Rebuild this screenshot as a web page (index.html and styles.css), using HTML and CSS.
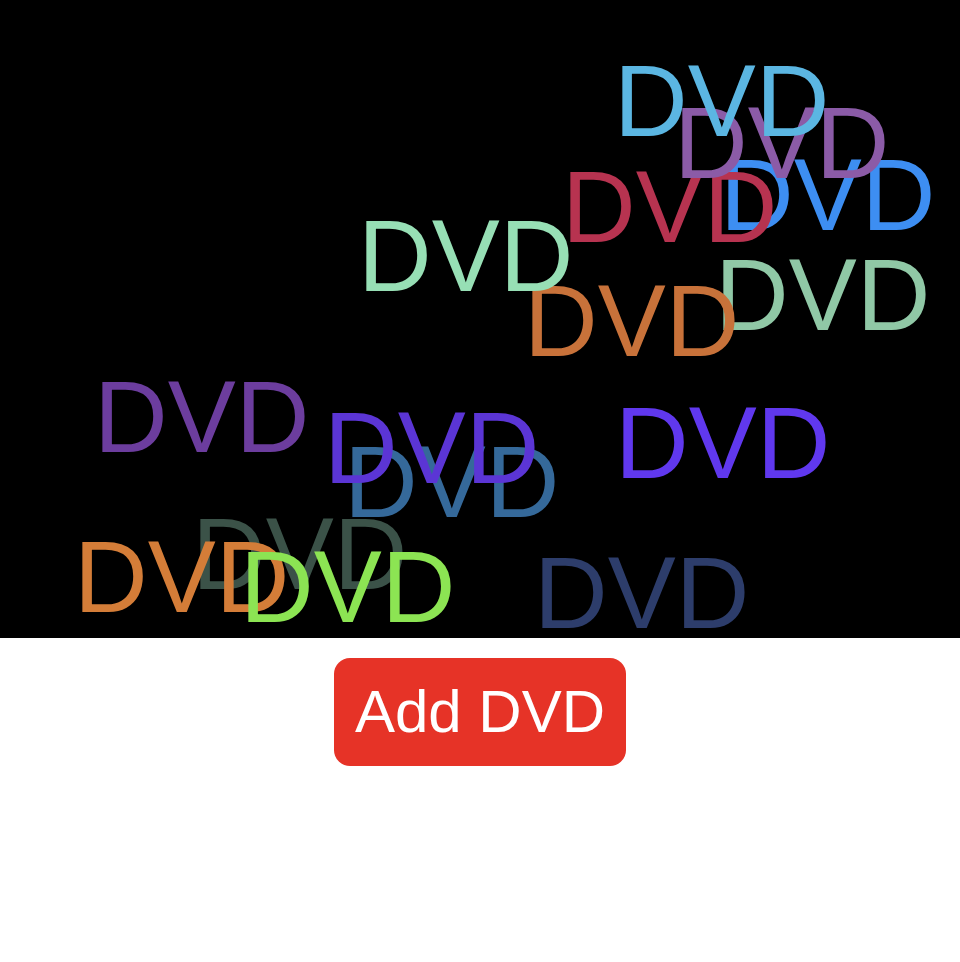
FILE: index.html
```html
<!DOCTYPE html>
<html lang="en">
<head>
<meta charset="utf-8">
<title>DVD</title>
<link rel="stylesheet" href="styles.css">
</head>
<body>
<div class="app">
  <div class="stage">
    <span class="dvd" style="left:715px;top:255px;color:#90c8a6">DVD</span>
    <span class="dvd" style="left:524px;top:281px;color:#c8723a">DVD</span>
    <span class="dvd" style="left:358px;top:216px;color:#97dfb5">DVD</span>
    <span class="dvd" style="left:720px;top:155px;color:#3d8ef2">DVD</span>
    <span class="dvd" style="left:562px;top:167px;color:#b73350">DVD</span>
    <span class="dvd" style="left:674px;top:103px;color:#8b5ba7">DVD</span>
    <span class="dvd" style="left:614px;top:61px;color:#5bb6e2">DVD</span>
    <span class="dvd" style="left:344px;top:442px;color:#35699a">DVD</span>
    <span class="dvd" style="left:324px;top:408px;color:#5b35d5">DVD</span>
    <span class="dvd" style="left:615px;top:403px;color:#6038ee">DVD</span>
    <span class="dvd" style="left:94px;top:377px;color:#6c3d9e">DVD</span>
    <span class="dvd" style="left:192px;top:514px;color:#3b5248">DVD</span>
    <span class="dvd" style="left:74px;top:537px;color:#d47d38">DVD</span>
    <span class="dvd" style="left:240px;top:547px;color:#8ce453">DVD</span>
    <span class="dvd" style="left:534px;top:553px;color:#2d3d6b">DVD</span>
  </div>
  <div class="actions">
    <button class="add-btn" type="button">Add DVD</button>
  </div>
</div>
</body>
</html>
```
FILE: styles.css
```css
html, body {
  margin: 0;
  padding: 0;
  background: #ffffff;
}

.app {
  display: flex;
  flex-direction: column;
  align-items: stretch;
  font-family: "Liberation Sans", Arial, sans-serif;
}

.stage {
  position: relative;
  width: 960px;
  height: 638px;
  background: #000000;
  overflow: hidden;
}

.dvd {
  position: absolute;
  font-size: 102px;
  line-height: 80px;
  white-space: nowrap;
}

.actions {
  display: flex;
  justify-content: center;
  padding-top: 20px;
}

.add-btn {
  display: flex;
  align-items: center;
  justify-content: center;
  box-sizing: border-box;
  font-family: "Liberation Sans", Arial, sans-serif;
  font-size: 60px;
  line-height: 68px;
  white-space: nowrap;
  color: #ffffff;
  background: #e63327;
  border: none;
  border-radius: 16px;
  padding: 0;
  width: 292px;
  height: 108px;
  cursor: pointer;
}
```
